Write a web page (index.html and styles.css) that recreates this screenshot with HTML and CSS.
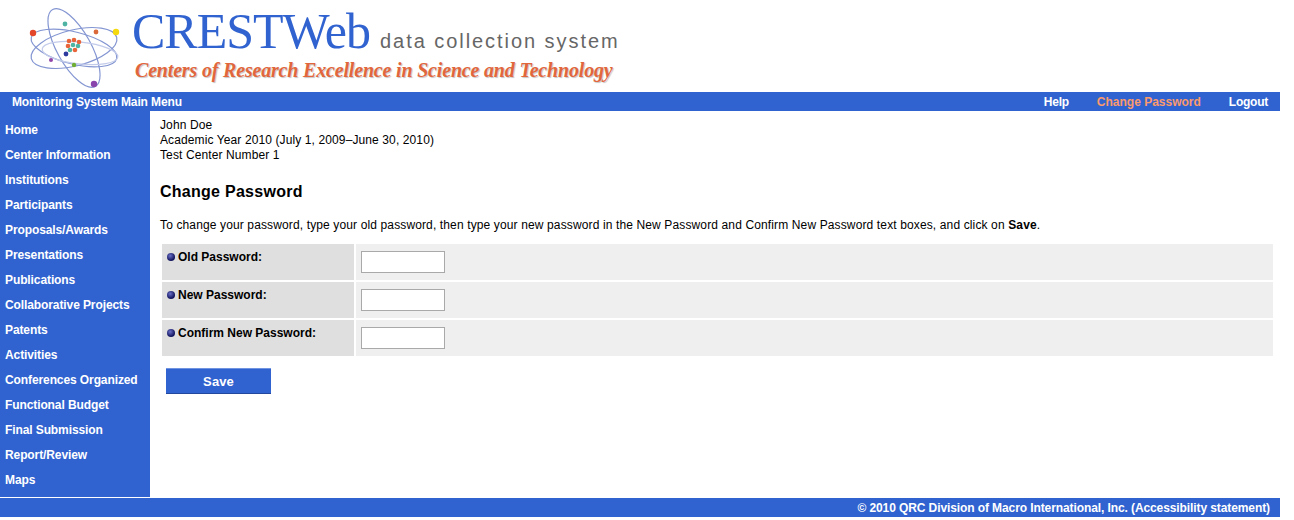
FILE: index.html
```html
<!DOCTYPE html>
<html lang="en">
<head>
<meta charset="UTF-8">
<title>CRESTWeb - Change Password</title>
<link rel="stylesheet" href="styles.css">
</head>
<body>
<div class="page">
<header class="logo">
<svg class="atom" width="100" height="84" viewBox="0 0 100 84">
<g fill="none" stroke="#8496d2" stroke-width="1.2">
<ellipse cx="48" cy="42" rx="44" ry="18" transform="rotate(-14 48 42)"/>
<ellipse cx="48" cy="42" rx="44" ry="16" transform="rotate(14 48 42)"/>
<ellipse cx="48" cy="42" rx="44" ry="17" transform="rotate(61 48 42)"/>
<ellipse cx="54" cy="47" rx="38" ry="11" transform="rotate(6 54 47)" stroke="#c3cbea"/>
</g>
<circle cx="7" cy="27" r="3.2" fill="#e2472c"/>
<circle cx="90" cy="26" r="3.2" fill="#f5d90f"/>
<circle cx="70" cy="26" r="2.4" fill="#d9693a"/>
<circle cx="39" cy="18" r="2.4" fill="#4fb3a3"/>
<circle cx="40" cy="48" r="2.4" fill="#2f3a9e"/>
<circle cx="25" cy="54" r="2" fill="#9146a8"/>
<circle cx="48" cy="59" r="2.2" fill="#6fae34"/>
<circle cx="68" cy="78" r="3.2" fill="#8a45ad"/>
<g>
<circle cx="43" cy="35" r="2.3" fill="#e8643a"/>
<circle cx="48" cy="34" r="2.3" fill="#e8643a"/>
<circle cx="53" cy="36" r="2.3" fill="#e8643a"/>
<circle cx="42" cy="40" r="2.3" fill="#e8643a"/>
<circle cx="47" cy="39" r="2.3" fill="#4fb3a3"/>
<circle cx="52" cy="40" r="2.3" fill="#4fb3a3"/>
<circle cx="44" cy="44" r="2.3" fill="#4fb3a3"/>
<circle cx="49" cy="44" r="2.3" fill="#e8643a"/>
</g>
</svg>
<div class="logo-text">
<div class="logo-top">
<span class="logo-name">CRESTWeb</span>
<span class="logo-sub">data collection system</span>
</div>
<div class="logo-tag">Centers of Research Excellence in Science and Technology</div>
</div>
</header>

<nav class="topbar">
<span class="topbar-title">Monitoring System Main Menu</span>
<ul class="topbar-links">
<li><a href="#">Help</a></li>
<li><a href="#" class="current">Change Password</a></li>
<li><a href="#">Logout</a></li>
</ul>
</nav>

<div class="main">
<ul class="sidebar">
<li><a href="#">Home</a></li>
<li><a href="#">Center Information</a></li>
<li><a href="#">Institutions</a></li>
<li><a href="#">Participants</a></li>
<li><a href="#">Proposals/Awards</a></li>
<li><a href="#">Presentations</a></li>
<li><a href="#">Publications</a></li>
<li><a href="#">Collaborative Projects</a></li>
<li><a href="#">Patents</a></li>
<li><a href="#">Activities</a></li>
<li><a href="#">Conferences Organized</a></li>
<li><a href="#">Functional Budget</a></li>
<li><a href="#">Final Submission</a></li>
<li><a href="#">Report/Review</a></li>
<li><a href="#">Maps</a></li>
</ul>

<main class="content">
<p class="info">John Doe<br>Academic Year 2010 (July 1, 2009–June 30, 2010)<br>Test Center Number 1</p>
<h1>Change Password</h1>
<p class="help">To change your password, type your old password, then type your new password in the New Password and Confirm New Password text boxes, and click on <b>Save</b>.</p>
<form class="form">
<div class="row">
<label class="label"><span class="dot"></span>Old Password:</label>
<div class="field"><input type="password"></div>
</div>
<div class="row">
<label class="label"><span class="dot"></span>New Password:</label>
<div class="field"><input type="password"></div>
</div>
<div class="row">
<label class="label"><span class="dot"></span>Confirm New Password:</label>
<div class="field"><input type="password"></div>
</div>
<button type="button" class="save">Save</button>
</form>
</main>
</div>

<footer class="footer">© 2010 QRC Division of Macro International, Inc. (Accessibility statement)</footer>
</div>
</body>
</html>
```

FILE: styles.css
```css
body {
margin: 0;
background-color: #fff;
font-family: "Liberation Sans", Arial, sans-serif;
font-size: 12px;
color: #000;
}

.page {
width: 1280px;
}

/* logo */
.logo {
display: flex;
height: 92px;
box-sizing: border-box;
padding: 6px 0 0 26px;
}

.atom {
flex: none;
}

.logo-text {
margin-left: 6px;
}

.logo-top {
display: flex;
align-items: baseline;
height: 50px;
line-height: 50px;
}

.logo-name {
font-family: "Liberation Serif", serif;
font-size: 50px;
letter-spacing: -1px;
color: #3163d0;
}

.logo-sub {
margin-left: 10px;
font-size: 20px;
letter-spacing: 1.95px;
color: #666;
}

.logo-tag {
margin: 2px 0 0 3px;
font-family: "Liberation Serif", serif;
font-size: 20px;
font-weight: bold;
font-style: italic;
line-height: 24px;
letter-spacing: -0.18px;
color: #e2663c;
text-shadow: 1px 1px 1px #c4c4c4;
}

/* top bar */
.topbar {
display: flex;
justify-content: space-between;
height: 19px;
line-height: 20px;
padding: 0 12px;
background-color: #3163d0;
color: #fff;
font-weight: bold;
letter-spacing: -0.13px;
}

.topbar-links {
display: flex;
gap: 28px;
list-style-type: none;
margin: 0;
padding: 0;
letter-spacing: -0.25px;
}

.topbar a {
color: #fff;
text-decoration: none;
}

.topbar a.current {
color: #fb9a6c;
letter-spacing: 0;
}

/* sidebar */
.main {
display: flex;
}

.sidebar {
flex: none;
width: 150px;
height: 386px;
box-sizing: border-box;
list-style-type: none;
margin: 0;
padding: 7px 0 0;
background-color: #3163d0;
}

.sidebar li {
height: 25px;
line-height: 25px;
padding-left: 5px;
}

.sidebar a {
color: #fff;
font-weight: bold;
letter-spacing: -0.1px;
text-decoration: none;
}

/* content */
.content {
flex: 1;
padding: 7px 7px 0 10px;
}

.info {
margin: 0;
line-height: 15px;
letter-spacing: 0.11px;
}

h1 {
margin: 19px 0 0;
font-size: 16px;
line-height: 20px;
letter-spacing: 0.27px;
}

.help {
margin: 16px 0 0;
line-height: 15px;
letter-spacing: 0.13px;
}

.form {
margin: 11px 0 0 2px;
}

.row {
display: flex;
gap: 2px;
height: 36px;
margin-bottom: 2px;
}

.label {
display: flex;
align-items: flex-start;
flex: none;
width: 187px;
padding: 6px 0 0 5px;
background-color: #dfdfdf;
font-weight: bold;
line-height: 14px;
}

.dot {
flex: none;
width: 8px;
height: 8px;
margin: 3px 3px 0 0;
border-radius: 50%;
background: radial-gradient(circle at 40% 35%, #6a70c8, #14165f 65%);
}

.field {
flex: 1;
padding: 7px 0 0 5px;
background-color: #efefef;
}

.field input {
display: block;
width: 84px;
height: 22px;
box-sizing: border-box;
margin: 0;
padding: 0 2px;
border: 1px solid #a9a9a9;
background-color: #fff;
}

.save {
display: block;
width: 105px;
height: 26px;
margin: 12px 0 0 4px;
padding: 0;
border: 0;
border-top: 1px solid #6f93e0;
border-bottom: 1px solid #23479c;
background-color: #3163d0;
color: #fff;
font-family: "Liberation Sans", Arial, sans-serif;
font-size: 13px;
font-weight: bold;
letter-spacing: 0.1px;
}

.footer {
height: 19px;
margin-top: 1px;
line-height: 20px;
padding-right: 10px;
background-color: #3163d0;
color: #fff;
font-weight: bold;
letter-spacing: -0.095px;
text-align: right;
}
```
